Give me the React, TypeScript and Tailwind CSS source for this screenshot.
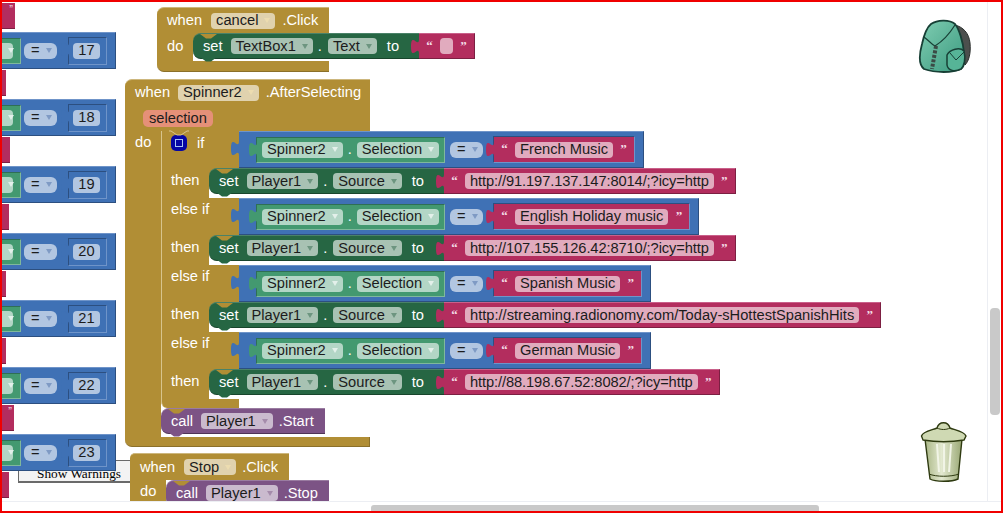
const GOLD = "#b18e35";

const Arrow = ({ color }: { color: string }) => (
  <span className={`ml-[6px] h-0 w-0 border-x-[3.5px] border-t-[5px] border-x-transparent ${color}`} />
);

const Pill = ({ text, color, className = "" }: { text: string; color: string; className?: string }) => (
  <span className={`flex h-[16px] items-center rounded-[4px] pl-[5px] pr-[5px] text-[#1c1c1c] ${className}`}>
    {text}
    <Arrow color={color} />
  </span>
);

const Tab = ({ fill, top }: { fill: string; top: string }) => (
  <svg width="8" height="15" viewBox="0 0 8 15" className={`absolute -left-[8px] ${top}`}>
    <path d="M8 0c0,10 -8,-8 -8,7.5s8,-2.5 8,7.5z" fill={fill} />
  </svg>
);

const Notch = ({ fill = GOLD }: { fill?: string }) => (
  <svg width="17" height="5" viewBox="0 0 17 5" className="absolute left-[7px] top-0">
    <path d="M0 0l6 4.5h5l6-4.5z" fill={fill} />
  </svg>
);

const Bump = ({ fill }: { fill: string }) => (
  <svg width="17" height="5" viewBox="0 0 17 5" className="absolute -bottom-[4px] left-[7px]">
    <path d="M0 0l6 4.5h5l6-4.5z" fill={fill} />
  </svg>
);

const Quote = ({ open }: { open: boolean }) => (
  <span className="flex h-full w-[21px] justify-center pt-[5px] font-['Liberation_Serif',serif] text-[13px] font-bold leading-[13px] text-[#f4dde6]">
    {open ? "“" : "”"}
  </span>
);

const Str = ({ text, tight }: { text: string; tight?: boolean }) => (
  <div className="relative flex h-[26px] items-center border-b border-r border-b-[#7c1f42] border-r-[#7c1f42] border-t border-t-[#c9608a] bg-[#b32d5e]">
    <Tab fill="#b32d5e" top="top-[5px]" />
    <Quote open />
    <span
      className={`flex h-[16px] min-w-[13px] items-center rounded-[4px] bg-white/60 px-[5px] text-[#1c1c1c] ${tight ? "tracking-[-0.1px]" : ""}`}
    >
      {text}
    </span>
    <Quote open={false} />
  </div>
);

const SetBlock = ({ comp, prop, value, tight }: { comp: string; prop: string; value: string; tight?: boolean }) => (
  <div className="relative flex h-[26px] text-white">
    <span className="absolute left-0 top-0 h-[8px] w-[8px] bg-[#b18e35]" />
    <div className="relative flex items-center rounded-l-[8px] border-b border-b-[#18452c] border-t border-t-[#4a8268] bg-[#266643] pl-[10px] pr-[20px]">
      <Notch />
      <Bump fill="#266643" />
      set
      <Pill text={comp} color="border-t-[#6d9580]" className="ml-[8px] bg-white/60" />
      <span className="ml-[5px] mr-[6px]">.</span>
      <Pill text={prop} color="border-t-[#6d9580]" className="bg-white/60" />
      <span className="ml-[10px]">to</span>
    </div>
    <Str text={value} tight={tight} />
  </div>
);

const CallBlock = ({ method, width }: { method: string; width: string }) => (
  <div
    className={`relative flex h-[26px] items-center rounded-l-[8px] border-b border-b-[#4e3355] border-t border-t-[#9a7ca1] bg-[#7c5385] pl-[10px] text-white ${width}`}
  >
    <Notch />
    <Bump fill="#7c5385" />
    call
    <Pill text="Player1" color="border-t-[#a58cab]" className="ml-[8px] bg-white/60" />
    <span className="ml-[6px]">{method}</span>
  </div>
);

// blue "Spinner2.Selection = text" test plugged into an if / else if socket
const Cond = ({ text }: { text: string }) => (
  <div className="relative flex h-[37px] items-center border-b border-r border-b-[#2c4f80] border-r-[#2c4f80] border-t border-t-[#6f94c9] bg-[#3f71b5] pl-[17px] pr-[8px]">
    <Tab fill="#3f71b5" top="top-[9px]" />
    <div className="relative flex h-[26px] items-center border border-b-[#7fb89c] border-l-[#2f6f55] border-r-[#7fb89c] border-t-[#2f6f55] bg-[#439970] pl-[5px] pr-[5px]">
      <Tab fill="#439970" top="top-[4px]" />
      <Pill text="Spinner2" color="border-t-[#e3f0ea]" className="bg-white/60" />
      <span className="mx-[5px] text-white">.</span>
      <Pill text="Selection" color="border-t-[#e3f0ea]" className="bg-white/60" />
    </div>
    <Pill text="=" color="border-t-[#7f9ac4]" className="ml-[5px] w-[33px] rounded-[6px] bg-white/60 pl-[7px]" />
    <div className="relative ml-[10px] flex h-[27px] items-center border border-b-[#6f94c9] border-l-[#2c4f80] border-r-[#6f94c9] border-t-[#2c4f80] bg-[#b32d5e]">
      <Tab fill="#b32d5e" top="top-[5px]" />
      <Quote open />
      <span className="flex h-[16px] items-center rounded-[4px] bg-white/60 px-[5px] text-[#1c1c1c]">{text}</span>
      <Quote open={false} />
    </div>
  </div>
);

const branches = [
  { label: "if", text: "French Music", url: "http://91.197.137.147:8014/;?icy=http", tight: true },
  { label: "else if", text: "English Holiday music", url: "http://107.155.126.42:8710/;?icy=http", tight: true },
  { label: "else if", text: "Spanish Music", url: "http://streaming.radionomy.com/Today-sHottestSpanishHits", tight: false },
  { label: "else if", text: "German Music", url: "http://88.198.67.52:8082/;?icy=http", tight: true },
];

const IfBlock = () => (
  <div className="relative flex-col">
    <svg width="20" height="6" viewBox="0 0 20 6" className="absolute left-[8px] -top-px z-10">
      <path d="M0 1h2l6 4h4l6-4h2" fill="none" stroke="#d8c48c" />
    </svg>
    {branches.map((b) => (
      <div key={b.text}>
        <div className="flex h-[37px]">
          <div className="flex w-[78px] border-l border-l-[#d8c48c] bg-[#b18e35] pl-[9px] text-white">
            {b.label === "if" ? (
              <>
                <span className="mt-[4px] flex h-[16px] w-[16px] items-center justify-center rounded-[5px] bg-[#0505a5]">
                  <span className="h-[8px] w-[8px] border border-[#a9c4f0]" />
                </span>
                <span className="ml-[10px] pt-[4px] leading-[16px]">if</span>
              </>
            ) : (
              <span className="pt-[3px] leading-[16px]">{b.label}</span>
            )}
          </div>
          <Cond text={b.text} />
        </div>
        <div className="flex h-[30px]">
          <div className="w-[48px] border-l border-l-[#d8c48c] bg-[#b18e35] pl-[9px] pt-[4px] leading-[16px] text-white">then</div>
          <SetBlock comp="Player1" prop="Source" value={b.url} tight={b.tight} />
        </div>
      </div>
    ))}
    <div className="h-[9px] w-[78px] rounded-bl-[6px] border-l border-l-[#d8c48c] bg-[#b18e35]" />
    <CallBlock method=".Start" width="w-[164px]" />
  </div>
);

const sideBlocks = [
  { top: "top-[32px]", n: 17 },
  { top: "top-[99px]", n: 18 },
  { top: "top-[166px]", n: 19 },
  { top: "top-[233px]", n: 20 },
  { top: "top-[300px]", n: 21 },
  { top: "top-[367px]", n: 22 },
  { top: "top-[434px]", n: 23 },
];

const sideStubs = [
  { top: "top-[3px]", w: "w-[15px]", quote: true },
  { top: "top-[70px]", w: "w-[6px]", quote: false },
  { top: "top-[137px]", w: "w-[10px]", quote: false },
  { top: "top-[204px]", w: "w-[9px]", quote: false },
  { top: "top-[271px]", w: "w-[6px]", quote: false },
  { top: "top-[338px]", w: "w-[6px]", quote: false },
  { top: "top-[405px]", w: "w-[14px]", quote: true },
  { top: "top-[472px]", w: "w-[9px]", quote: false },
];

const SideBlock = ({ top, n }: { top: string; n: number }) => (
  <div className={`absolute left-0 flex h-[37px] w-[116px] items-center border-b border-r border-b-[#2c4f80] border-r-[#2c4f80] border-t border-t-[#6f94c9] bg-[#3f71b5] ${top}`}>
    <div className="flex h-[26px] w-[21px] items-center border border-b-[#7fb89c] border-r-[#7fb89c] border-t-[#2f6f55] border-l-0 bg-[#439970]">
      <span className="flex h-[16px] w-[13px] items-center rounded-r-[4px] bg-white/60 pl-[2px]">
        <Arrow color="border-t-[#e3f0ea]" />
      </span>
    </div>
    <Pill text="=" color="border-t-[#7f9ac4]" className="ml-[3px] w-[33px] rounded-[6px] bg-white/60 pl-[7px]" />
    <div className="relative ml-[11px] flex h-[28px] w-[39px] items-center border border-b-[#6f94c9] border-l-[#2c4f80] border-r-[#6f94c9] border-t-[#2c4f80] pl-[4px]">
      <Tab fill="#3f71b5" top="top-[4px]" />
      <span className="flex h-[16px] w-[27px] items-center justify-center rounded-[4px] bg-white/60 text-[#1c1c1c]">{n}</span>
    </div>
  </div>
);

const Backpack = () => (
  <svg width="56" height="56" viewBox="0 0 56 56" className="absolute left-[917px] top-[19px]">
    <defs>
      <linearGradient id="pack" x1="0" y1="0" x2="1" y2="1">
        <stop offset="0" stopColor="#80cdb2" />
        <stop offset="1" stopColor="#3a9a7f" />
      </linearGradient>
    </defs>
    <path d="M38 6C46 8 52 14 53 24 54 34 52 42 48 46L46 30z" fill="#4c4f4d" stroke="#2a2e2c" />
    <path
      d="M14 5C20 1 32 0 38 5 42 10 46 22 47 34 48 42 47 48 44 50 36 54 18 54 7 50 2 46 2 36 5 25 7 16 9 9 14 5z"
      fill="url(#pack)"
      stroke="#173f35"
      strokeWidth="1.8"
    />
    <path d="M7 18C12 22 16 26 18 27 26 22 33 14 38 6" fill="none" stroke="#173f35" strokeWidth="1.2" />
    <path d="M30 36C33 30 43 28 47 32 49 40 47 47 44 50 38 53 31 52 30 46z" fill="#56b497" stroke="#173f35" strokeWidth="1.5" />
    <path d="M33 34L39 41 47 33" fill="none" stroke="#173f35" />
    <path d="M19 27L15 50" stroke="#3b4a45" strokeWidth="4" strokeDasharray="3 1.5" />
  </svg>
);

const Trash = () => (
  <svg width="48" height="63" viewBox="0 0 48 63" className="absolute left-[920px] top-[420px]">
    <defs>
      <linearGradient id="can" x1="0" y1="0" x2="1" y2="0">
        <stop offset="0" stopColor="#a9b685" />
        <stop offset="0.45" stopColor="#e3e9d0" />
        <stop offset="1" stopColor="#9aa875" />
      </linearGradient>
    </defs>
    <path d="M5 19H42L38 59C32 62 15 62 10 59z" fill="url(#can)" stroke="#2e3a10" strokeWidth="1.4" />
    <path d="M9 54C16 57 31 57 39 54" fill="none" stroke="#2e3a10" />
    <path d="M17 24L19 52M24 24V52M31 24L29 52" stroke="#f1f4e6" strokeWidth="2" />
    <path
      d="M1.500 16C3 11 13 10 17 8 19 1 28 1 30 8 34 10 44 11 46 16L44 20C32 22 15 22 3 20z"
      fill="#cfd9b3"
      stroke="#2e3a10"
      strokeWidth="1.4"
    />
    <path d="M17 8C21 10 26 10 30 8" fill="none" stroke="#2e3a10" />
  </svg>
);

const App = () => {
  return (
    <div className="relative h-[513px] w-[1003px] overflow-hidden bg-white font-['Liberation_Sans',Arial,sans-serif] text-[14.67px] leading-none">
      <div className="flex h-[501px]">
        <div className="relative h-full w-[987px] overflow-hidden">
          {/* Show Warnings button sits behind the blocks */}
          <div className="absolute left-[18px] top-[460px] flex h-[23px] w-[125px] items-end border-b-2 border-l border-t border-[#6a6a6a] bg-[#f3f3f3] pb-px pl-[18px] font-['Liberation_Serif',serif] text-[13.3px] text-black">
            Show Warnings
          </div>

          {sideStubs.map((s) => (
            <div
              key={s.top}
              className={`absolute left-0 flex h-[26px] justify-end border-b border-b-[#7c1f42] bg-[#b32d5e] pr-[2px] pt-px text-[11px] text-[#f4dde6] ${s.top} ${s.w}`}
            >
              {s.quote ? "”" : ""}
            </div>
          ))}
          {sideBlocks.map((b) => (
            <SideBlock key={b.n} top={b.top} n={b.n} />
          ))}

          {/* cancel.Click */}
          <div className="absolute left-[157px] top-[7px] text-white">
            <div className="flex h-[26px] w-[172px] items-center rounded-tl-[7px] border-t border-t-[#cdb77d] bg-[#b18e35] pl-[10px]">
              when
              <Pill text="cancel" color="border-t-[#ecdcb0]" className="ml-[9px] bg-white/60" />
              <span className="ml-[7px]">.Click</span>
            </div>
            <div className="flex h-[28px]">
              <div className="w-[36px] bg-[#b18e35] pl-[10px] pt-[5px] leading-[16px]">do</div>
              <SetBlock comp="TextBox1" prop="Text" value="" />
            </div>
            <div className="h-[11px] w-[172px] rounded-bl-[7px] border-b border-b-[#8b702a] bg-[#b18e35]" />
          </div>

          {/* Spinner2.AfterSelecting */}
          <div className="absolute left-[125px] top-[79px] text-white">
            <div className="h-[52px] w-[245px] rounded-tl-[7px] border-t border-t-[#cdb77d] bg-[#b18e35]">
              <div className="flex h-[25px] items-center pl-[10px]">
                when
                <Pill text="Spinner2" color="border-t-[#ecdcb0]" className="ml-[8px] bg-white/60" />
                <span className="ml-[7px]">.AfterSelecting</span>
              </div>
              <div className="flex h-[26px] items-center pl-[18px]">
                <span className="flex h-[17px] items-center rounded-[5px] bg-[#e59078] px-[6px] text-[#1c1c1c]">selection</span>
              </div>
            </div>
            <div className="flex">
              <div className="w-[36px] bg-[#b18e35] pl-[10px] pt-[3px] leading-[16px]">do</div>
              <div>
                <IfBlock />
                <div className="h-[3px]" />
              </div>
            </div>
            <div className="h-[10px] w-[245px] rounded-bl-[7px] border-b border-r border-b-[#8b702a] border-r-[#8b702a] bg-[#b18e35]" />
          </div>

          {/* Stop.Click */}
          <div className="absolute left-[130px] top-[453px] text-white">
            <div className="flex h-[27px] w-[159px] items-center rounded-tl-[5px] border-t border-t-[#cdb77d] bg-[#b18e35] pl-[10px]">
              when
              <Pill text="Stop" color="border-t-[#ecdcb0]" className="ml-[9px] bg-white/60" />
              <span className="ml-[6px]">.Click</span>
            </div>
            <div className="flex">
              <div className="w-[36px] bg-[#b18e35] pl-[10px] pt-[3px] leading-[16px]">do</div>
              <CallBlock method=".Stop" width="w-[163px]" />
            </div>
          </div>

          <Backpack />
          <Trash />
        </div>
        <div className="w-[16px] border-l border-l-[#eceef3] pl-[2px] pt-[308px]">
          <div className="h-[107px] w-[10px] rounded-[4px] bg-[#c9c9c9]" />
        </div>
      </div>
      <div className="h-[12px] border-t border-t-[#eceef3] pl-[371px] pt-[3px]">
        <div className="h-[7px] w-[448px] rounded-t-[3px] bg-[#c9c9c9]" />
      </div>
      {/* red annotation frame over the whole capture */}
      <div className="pointer-events-none absolute inset-0 border-2 border-[#f00000]" />
    </div>
  );
};

export default App;
